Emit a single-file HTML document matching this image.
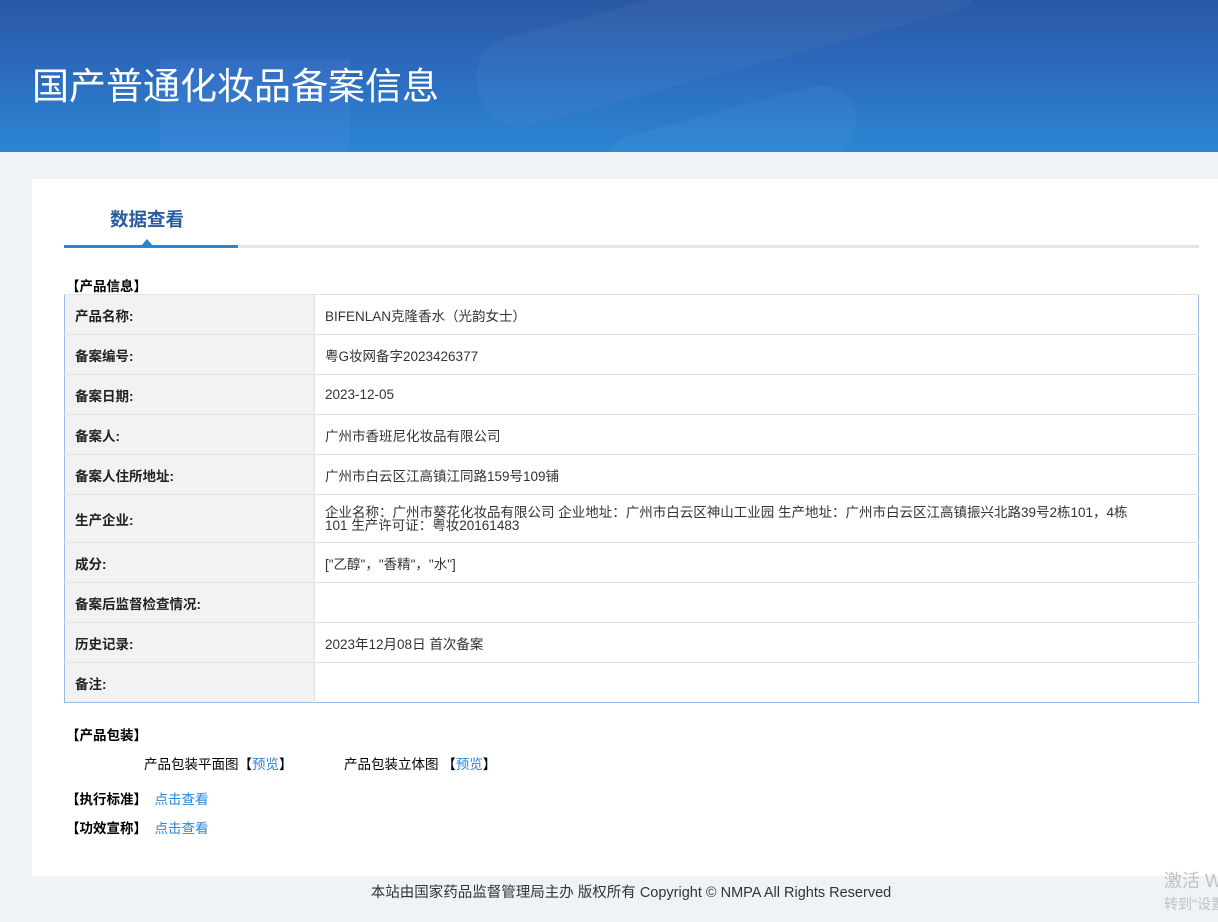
<!DOCTYPE html>
<html><head><meta charset="utf-8"><style>
*{margin:0;padding:0;box-sizing:border-box}
body{width:1218px;height:922px;overflow:hidden;background:#eff3f6;font-family:"Liberation Sans","Noto Sans CJK SC",sans-serif;font-size:13.5px;color:#333;position:relative}
.hdr{position:absolute;left:0;top:0;width:1218px;height:152px;background:linear-gradient(180deg,#2a58a4 0%,#2c6cc0 50%,#2b86d4 100%);overflow:hidden}
.hdr h1{position:absolute;left:32px;top:56px;font-size:37px;font-weight:400;color:#fff;font-family:"Noto Sans CJK SC",sans-serif}
.blob{position:absolute;background:rgba(255,255,255,0.035);border-radius:40px}
.card{position:absolute;left:32px;top:179px;width:1186px;height:697px;background:#fff}
.tab{position:absolute;left:78px;top:27px;font-size:18.5px;font-weight:bold;color:#2a5aa0}
.line{position:absolute;left:32px;top:66px;width:1135px;height:3px;background:#e6e6e6}
.line i{position:absolute;left:0;top:0;width:174px;height:3px;background:#2686d9}
.tri{position:absolute;left:109px;top:60px;width:0;height:0;border-left:6px solid transparent;border-right:6px solid transparent;border-bottom:7px solid #2686d9}
.sec{position:absolute;left:34px;font-size:13.5px;font-weight:bold;color:#000}
table{position:absolute;left:32px;top:115px;width:1135px;border-collapse:collapse;border:1px solid #9bb9e3}
td{border-top:1px solid #e3e3e3;height:40px;padding:0 10px;font-size:13.5px;vertical-align:middle;color:#333}
td.l{width:250px;background:#f2f2f2;font-weight:bold;color:#222;border-right:1px solid #e3e3e3}
a{color:#2b86d9;text-decoration:none}
.ft{position:absolute;top:881px;left:0;width:1262px;text-align:center;font-size:14.5px;color:#333}
.wmb{position:absolute;left:1164px;top:868px;width:54px;height:54px;overflow:hidden;color:#bcc3c9;white-space:nowrap}
</style></head><body>
<div class="hdr">
<div class="blob" style="left:160px;top:60px;width:190px;height:100px;background:rgba(90,140,230,0.18);border-radius:0"></div>
<div class="blob" style="left:470px;top:-20px;width:520px;height:90px;transform:rotate(-15deg)"></div>
<div class="blob" style="left:600px;top:110px;width:260px;height:70px;transform:rotate(-15deg)"></div>
<h1>国产普通化妆品备案信息</h1>
</div>
<div class="card">
<div class="tab">数据查看</div>
<div class="line"><i></i></div>
<div class="tri"></div>
<div class="sec" style="top:96px">【产品信息】</div>
<table>
<tr><td class="l">产品名称:</td><td>BIFENLAN克隆香水（光韵女士）</td></tr>
<tr><td class="l">备案编号:</td><td>粤G妆网备字2023426377</td></tr>
<tr><td class="l">备案日期:</td><td>2023-12-05</td></tr>
<tr><td class="l">备案人:</td><td>广州市香班尼化妆品有限公司</td></tr>
<tr><td class="l">备案人住所地址:</td><td>广州市白云区江高镇江同路159号109铺</td></tr>
<tr><td class="l" style="height:48px">生产企业:</td><td style="line-height:13px">企业名称：广州市葵花化妆品有限公司 企业地址：广州市白云区神山工业园 生产地址：广州市白云区江高镇振兴北路39号2栋101，4栋<br>101 生产许可证：粤妆20161483</td></tr>
<tr><td class="l">成分:</td><td>["乙醇"，"香精"，"水"]</td></tr>
<tr><td class="l">备案后监督检查情况:</td><td></td></tr>
<tr><td class="l">历史记录:</td><td>2023年12月08日 首次备案</td></tr>
<tr><td class="l">备注:</td><td></td></tr>
</table>
<div class="sec" style="top:545px">【产品包装】</div>
<div style="position:absolute;left:112px;top:574px;color:#000">产品包装平面图【<a>预览</a>】</div>
<div style="position:absolute;left:312px;top:574px;color:#000">产品包装立体图 【<a>预览</a>】</div>
<div class="sec" style="top:609px">【执行标准】 &nbsp;<a style="font-weight:normal">点击查看</a></div>
<div class="sec" style="top:638px">【功效宣称】 &nbsp;<a style="font-weight:normal">点击查看</a></div>
</div>
<div class="ft">本站由国家药品监督管理局主办 版权所有 Copyright © NMPA All Rights Reserved</div>
<div class="wmb"><div style="font-size:18px;line-height:26px">激活 Windows</div><div style="font-size:14px">转到"设置"以激活</div></div>
</body></html>
